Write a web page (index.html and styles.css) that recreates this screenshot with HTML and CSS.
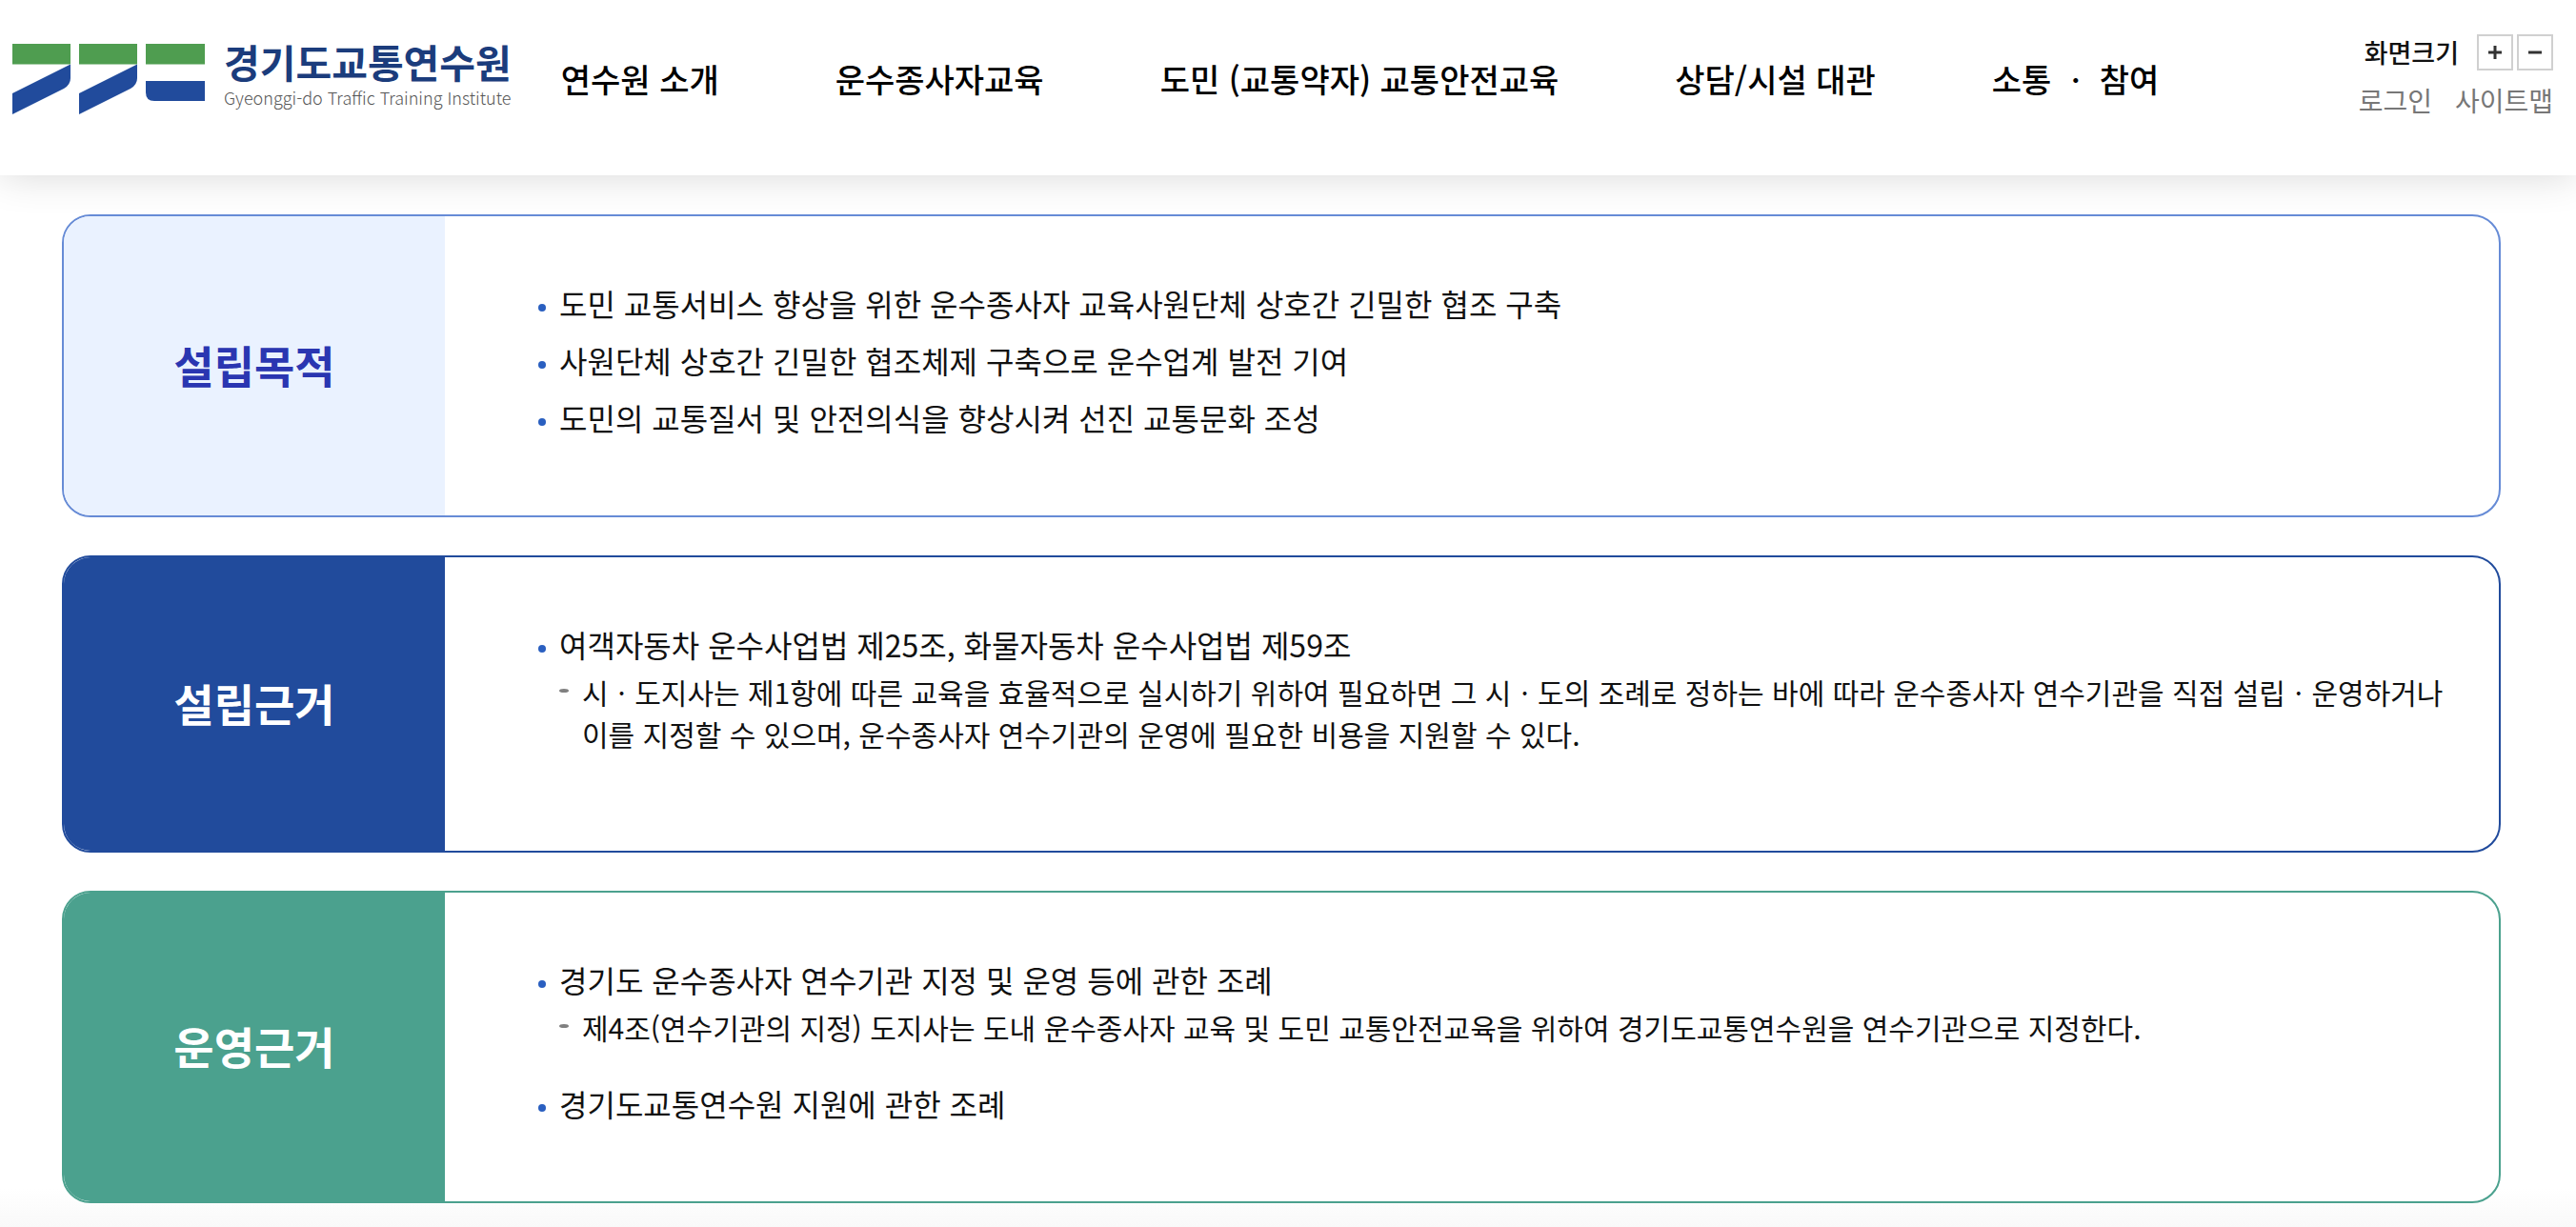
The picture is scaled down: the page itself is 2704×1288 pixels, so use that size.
FILE: index.html
```html
<!DOCTYPE html>
<html lang="ko">
  <head>
    <meta charset="UTF-8" />
    <meta name="viewport" content="width=device-width, initial-scale=1.0" />
    <title>경기도교통연수원</title>
    <link rel="stylesheet" href="styles.css">
  </head>
  <body>
    <header class="header">
      <a class="logo" href="#">
        <svg class="logo-mark" width="202" height="74" viewBox="0 0 202 74" aria-hidden="true">
          <g fill="#4f9d50">
            <path d="M0 0h61v21.500H0z" />
            <path d="M70 0h61v21.500H70z" />
            <path d="M140 0h62v21.500h-62z" />
          </g>
          <g fill="#214b9c">
            <path d="M0 52 61 21.500V36q0 7-7 11L0 74z" />
            <path d="M70 52 131 21.500V36q0 7-7 11L70 74z" />
            <path d="M140 39h62v21h-53q-9 0-9-9z" />
          </g>
        </svg>
        <span class="logo-text">
          <strong>경기도교통연수원</strong>
          <span>Gyeonggi-do Traffic Training Institute</span>
        </span>
      </a>
      <nav class="nav">
        <a href="#">연수원 소개</a>
        <a href="#">운수종사자교육</a>
        <a href="#">도민 (교통약자) 교통안전교육</a>
        <a href="#">상담/시설 대관</a>
        <a href="#">소통 ㆍ 참여</a>
      </nav>
      <div class="util">
        <div class="zoom">
          <span class="zoom-label">화면크기</span>
          <button type="button" aria-label="확대">
            <svg width="14" height="14" viewBox="0 0 14 14"><path d="M7 0v14M0 7h14" /></svg>
          </button>
          <button type="button" aria-label="축소">
            <svg width="14" height="14" viewBox="0 0 14 14"><path d="M0 7h14" /></svg>
          </button>
        </div>
        <div class="links">
          <a href="#">로그인</a>
          <a href="#">사이트맵</a>
        </div>
      </div>
    </header>

    <main class="content">
      <section class="card card-purpose">
        <h2>설립목적</h2>
        <ul class="list">
          <li>도민 교통서비스 향상을 위한 운수종사자 교육사원단체 상호간 긴밀한 협조 구축</li>
          <li>사원단체 상호간 긴밀한 협조체제 구축으로 운수업계 발전 기여</li>
          <li>도민의 교통질서 및 안전의식을 향상시켜 선진 교통문화 조성</li>
        </ul>
      </section>
      <section class="card card-basis">
        <h2>설립근거</h2>
        <ul class="list">
          <li>
            여객자동차 운수사업법 제25조, 화물자동차 운수사업법 제59조
            <ul class="sub-list">
              <li>시ㆍ도지사는 제1항에 따른 교육을 효율적으로 실시하기 위하여 필요하면 그 시ㆍ도의 조례로 정하는 바에 따라 운수종사자 연수기관을 직접 설립ㆍ운영하거나 이를 지정할 수 있으며, 운수종사자 연수기관의 운영에 필요한 비용을 지원할 수 있다.</li>
            </ul>
          </li>
        </ul>
      </section>
      <section class="card card-operation">
        <h2>운영근거</h2>
        <ul class="list">
          <li>
            경기도 운수종사자 연수기관 지정 및 운영 등에 관한 조례
            <ul class="sub-list">
              <li>제4조(연수기관의 지정) 도지사는 도내 운수종사자 교육 및 도민 교통안전교육을 위하여 경기도교통연수원을 연수기관으로 지정한다.</li>
            </ul>
          </li>
          <li>경기도교통연수원 지원에 관한 조례</li>
        </ul>
      </section>
    </main>
  </body>
</html>
```
FILE: styles.css
```css
* {
  box-sizing: border-box;
}
body {
  margin: 0;
  font-family: "Noto Sans CJK KR", sans-serif;
  color: #111;
  background-color: #fff;
  word-break: keep-all;
}
a {
  color: inherit;
  text-decoration: none;
}
ul {
  margin: 0;
  padding: 0;
  list-style: none;
}

/* header */
.header {
  position: relative;
  display: flex;
  align-items: flex-start;
  padding: 36px 24px 0 13px;
  min-height: 184px;
  background-color: #fff;
  box-shadow: 0 0 40px rgba(0, 0, 0, 0.16);
}
.logo {
  display: flex;
  gap: 20px;
}
.logo-mark {
  margin-top: 10px;
}
.logo-text {
  display: flex;
  flex-direction: column;
  padding-top: 4px;
  white-space: nowrap;
}
.logo-text strong {
  font-size: 41px;
  line-height: 48px;
  color: #1b3c7c;
}
.logo-text span {
  font-size: 18px;
  line-height: 28px;
  font-weight: 300;
  color: #555;
}
.nav {
  display: flex;
  gap: 122px;
  margin-left: 52px;
  padding-top: 22px;
  font-size: 34px;
  line-height: 50px;
  font-weight: 500;
  color: #000;
  white-space: nowrap;
}
.util {
  display: flex;
  flex-direction: column;
  align-items: flex-end;
  gap: 12px;
  margin-left: auto;
  white-space: nowrap;
}
.zoom {
  display: flex;
  align-items: center;
  gap: 4px;
}
.zoom-label {
  margin-right: 15px;
  font-size: 27px;
  line-height: 38px;
  font-weight: 500;
}
.zoom button {
  display: flex;
  align-items: center;
  justify-content: center;
  width: 38px;
  height: 38px;
  padding: 0;
  border: 2px solid #d0d0d0;
  background-color: #fff;
  cursor: pointer;
}
.zoom svg {
  fill: none;
  stroke: #333;
  stroke-width: 3;
}
.links {
  display: flex;
  gap: 24px;
  font-size: 28px;
  line-height: 38px;
  color: #777;
}

/* cards */
.content {
  display: flex;
  flex-direction: column;
  gap: 40px;
  padding: 41px 79px 25px 65px;
  background: linear-gradient(to top, #f9f9f9, #fff 40px);
}
.card {
  display: flex;
  border: 2px solid #214b9c;
  border-radius: 30px;
  background-color: #fff;
  overflow: hidden;
}
.card h2 {
  display: flex;
  flex: 0 0 400px;
  align-items: center;
  justify-content: center;
  margin: 0;
  padding-bottom: 4px;
  font-size: 46px;
  line-height: 60px;
  font-weight: 700;
  color: #fff;
  background-color: #214b9c;
}
.card-purpose {
  border-color: #668bd6;
}
.card-purpose h2 {
  color: #2a36b1;
  background-color: #eaf2ff;
}
.card-operation {
  border-color: #4ba18e;
}
.card-operation h2 {
  background-color: #4ba18e;
}
.list {
  display: flex;
  flex: 1;
  flex-direction: column;
  gap: 12px;
  padding: 67px 56px 79px 98px;
  font-size: 32px;
  line-height: 48px;
}
.list > li {
  position: relative;
  padding-left: 22px;
}
.list > li::before {
  content: "";
  position: absolute;
  top: 25px;
  left: 0;
  width: 8px;
  height: 8px;
  border-radius: 50%;
  background-color: #2a5fc0;
}
.sub-list {
  margin: 4px 0 22px;
  font-size: 30px;
  line-height: 44px;
}
.sub-list li {
  position: relative;
  padding-left: 24px;
}
.sub-list li::before {
  content: "";
  position: absolute;
  top: 19px;
  left: 0;
  width: 10px;
  height: 4px;
  border-radius: 50%;
  background-color: #808080;
}
```
